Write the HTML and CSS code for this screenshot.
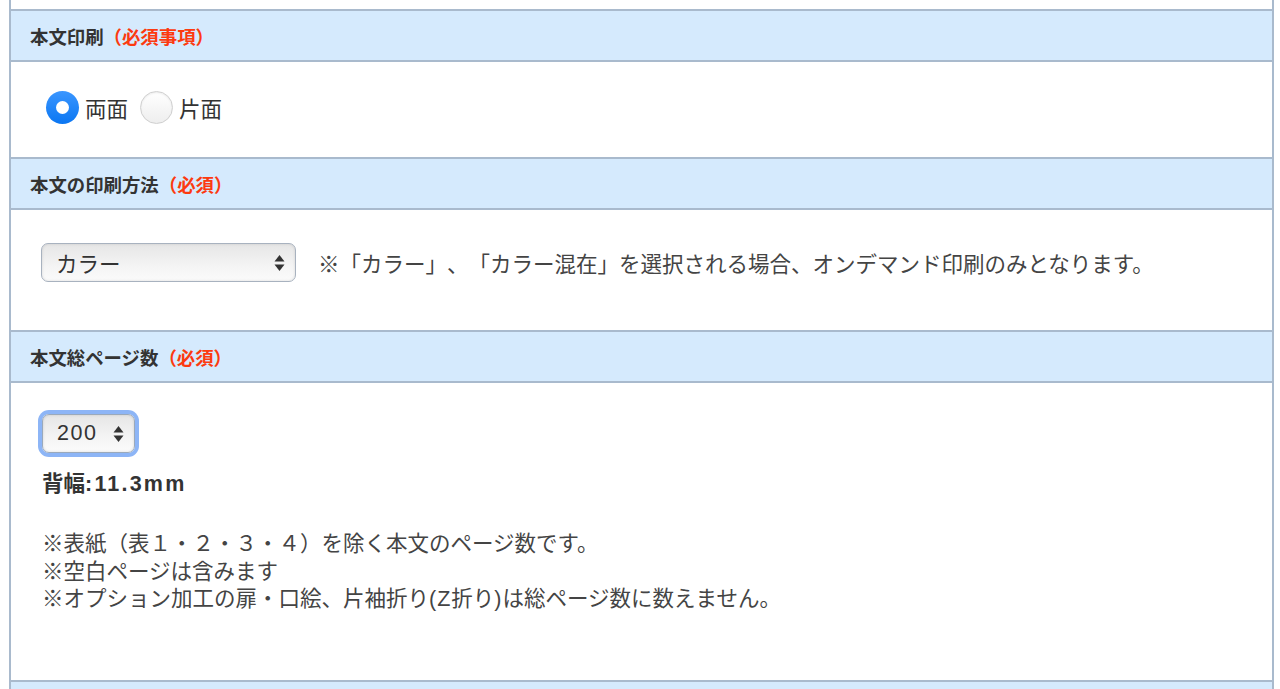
FILE: index.html
```html
<!DOCTYPE html>
<html lang="ja">
<head>
<meta charset="utf-8">
<title>本文設定</title>
<link rel="stylesheet" href="styles.css">
</head>
<body>
<div class="form">
  <div class="body body-top"></div>

  <div class="head">本文印刷<span class="req">（必須事項）</span></div>
  <div class="body body-print">
    <div class="radios">
      <label class="radio"><span class="dot checked"></span><span>両面</span></label>
      <label class="radio"><span class="dot"></span><span>片面</span></label>
    </div>
  </div>

  <div class="head">本文の印刷方法<span class="req">（必須）</span></div>
  <div class="body body-method">
    <div class="method-row">
      <div class="select select-wide"><span class="sel-text">カラー</span><svg class="arrows" width="11" height="16" viewBox="0 0 11 16"><path d="M5.5 0 L10.5 6.5 L0.5 6.5 Z"/><path d="M0.5 9.5 L10.5 9.5 L5.5 16 Z"/></svg></div>
      <p class="note">※「カラー」、「カラー混在」を選択される場合、オンデマンド印刷のみとなります。</p>
    </div>
  </div>

  <div class="head">本文総ページ数<span class="req">（必須）</span></div>
  <div class="body body-pages">
    <div class="select select-small focused"><span class="sel-text num">200</span><svg class="arrows" width="11" height="16" viewBox="0 0 11 16"><path d="M5.5 0 L10.5 6.5 L0.5 6.5 Z"/><path d="M0.5 9.5 L10.5 9.5 L5.5 16 Z"/></svg></div>
    <p class="spine">背幅<span class="num-bold">:11.3mm</span></p>
    <div class="notes">
      <p>※表紙（表１・２・３・４）を除く本文のページ数です。</p>
      <p>※空白ページは含みます</p>
      <p>※オプション加工の扉・口絵、片袖折り<span class="latin">(Z</span>折り<span class="latin">)</span>は総ページ数に数えません。</p>
    </div>
  </div>

  <div class="head head-last"></div>
</div>
</body>
</html>
```

FILE: styles.css
```css
html, body {
  margin: 0;
  padding: 0;
  background: #fff;
}
body {
  font-family: "Liberation Sans", "Noto Sans CJK JP", sans-serif;
  color: #444;
  height: 689px;
  overflow: hidden;
  text-spacing-trim: space-all;
}
.form {
  margin: 0 6px 0 9px;
  border-left: 2px solid #a9bacd;
  border-right: 2px solid #a9bacd;
}
.head {
  height: 49px;
  background: #d5eafd;
  border-top: 2px solid #a9bacd;
  border-bottom: 2px solid #a9bacd;
  padding-left: 19px;
  display: flex;
  align-items: center;
  font-size: 18.4px;
  font-weight: bold;
  color: #333;
}
.req {
  color: #fc3a10;
}
.body-top {
  height: 9px;
}
.body-print {
  height: 95px;
  padding-left: 35px;
  display: flex;
  align-items: center;
  box-sizing: border-box;
  padding-bottom: 4px;
}
.radios {
  display: flex;
  gap: 12px;
  font-size: 21.5px;
  color: #333;
}
.radio {
  display: flex;
  align-items: center;
  gap: 6px;
}
.dot {
  width: 33px;
  height: 33px;
  border-radius: 50%;
  box-sizing: border-box;
  border: 1px solid #cfcfcf;
  background: linear-gradient(#ffffff, #eeeeee);
  box-shadow: inset 0 1px 2px rgba(0,0,0,0.08);
  display: flex;
  align-items: center;
  justify-content: center;
}
.dot.checked {
  border: none;
  background: linear-gradient(#3b96ff, #0a76f2);
  box-shadow: none;
}
.dot.checked::after {
  content: "";
  width: 13px;
  height: 13px;
  border-radius: 50%;
  background: #fff;
}
.body-method {
  height: 120px;
  box-sizing: border-box;
  padding: 33px 0 0 30px;
}
.method-row {
  display: flex;
  align-items: center;
  gap: 22px;
}
.select {
  height: 39px;
  box-sizing: border-box;
  border: 1px solid #a8b2bf;
  border-radius: 7px;
  background: linear-gradient(#e6e6e6, #f4f4f4 60%, #fbfbfb);
  box-shadow: inset 0 0 3px rgba(0,0,0,0.12);
  display: flex;
  align-items: center;
  justify-content: space-between;
  padding: 0 10px 0 14px;
  font-size: 21.5px;
  color: #333;
}
.select-wide {
  width: 255px;
}
.select-small {
  width: 93px;
}
.num {
  letter-spacing: 1.5px;
}
.focused {
  box-shadow: inset 0 0 3px rgba(0,0,0,0.12), 0 0 0 4px #8db5f6;
  border-color: #9aa9bb;
}
.arrows {
  fill: #333;
  flex: none;
}
.note {
  margin: 0;
  font-size: 21.5px;
  color: #444;
}
.body-pages {
  height: 297px;
  box-sizing: border-box;
  padding: 31px 0 0 31px;
}
.spine {
  margin: 16px 0 0 0;
  font-size: 21.5px;
  line-height: 30px;
  font-weight: bold;
  color: #333;
}
.num-bold {
  letter-spacing: 2.2px;
}
.notes {
  margin-top: 32px;
  font-size: 21.5px;
  line-height: 27.5px;
  color: #444;
}
.notes p {
  margin: 0;
}
.latin {
  letter-spacing: 1px;
}
.head-last {
  border-bottom: none;
}
```
